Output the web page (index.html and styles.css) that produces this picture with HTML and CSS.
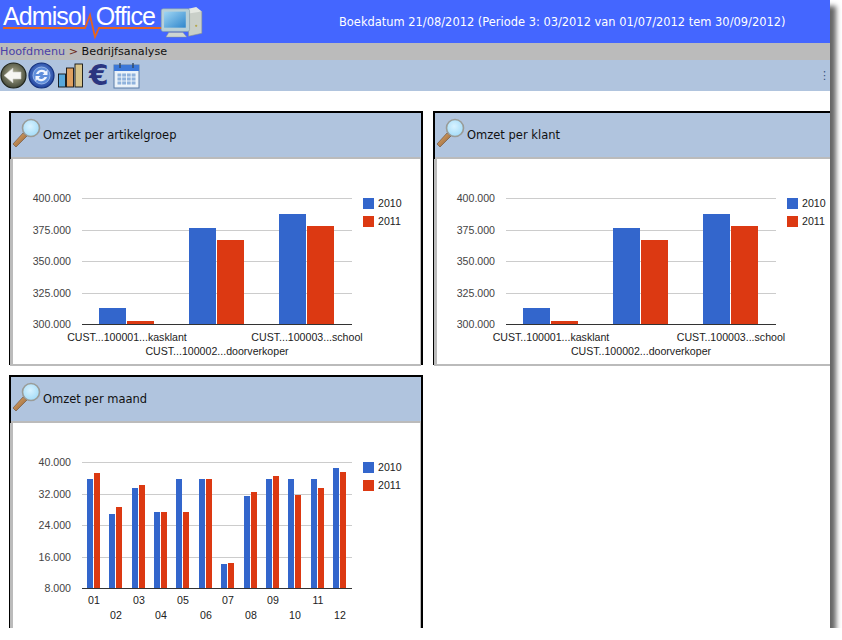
FILE: index.html
```html
<!DOCTYPE html>
<html lang="nl">

<head>
    <meta charset="UTF-8" />
    <meta name="viewport" content="width=device-width, initial-scale=1.0" />
    <title>Admisol Office - Bedrijfsanalyse</title>
    <link rel="stylesheet" href="styles.css">
</head>

<body>
    <svg class="defs" width="0" height="0" aria-hidden="true">
        <defs>
            <linearGradient id="handleGrad" x1="0" y1="0" x2="1" y2="1">
                <stop offset="0" stop-color="#e8b070" />
                <stop offset="1" stop-color="#8a5a30" />
            </linearGradient>
            <radialGradient id="lensGrad" cx="0.45" cy="0.4" r="0.6">
                <stop offset="0" stop-color="#d8f2ff" />
                <stop offset="1" stop-color="#a4dcf8" />
            </radialGradient>
            <radialGradient id="backGrad" cx="0.5" cy="0.45" r="0.6">
                <stop offset="0" stop-color="#b4b498" />
                <stop offset="1" stop-color="#3c4030" />
            </radialGradient>
            <radialGradient id="refreshGrad" cx="0.5" cy="0.45" r="0.6">
                <stop offset="0" stop-color="#6f9ae0" />
                <stop offset="1" stop-color="#1c3f9c" />
            </radialGradient>
            <linearGradient id="screenGrad" x1="0" y1="0" x2="1" y2="1">
                <stop offset="0" stop-color="#9fd6f4" />
                <stop offset="1" stop-color="#2f86cc" />
            </linearGradient>
            <symbol id="magnifier" viewBox="0 0 30 30">
                <path d="M2 26 L12 15 L16 18 L5 29 Z" fill="url(#handleGrad)" stroke="#6a4a30" stroke-width="0.6" />
                <circle cx="20" cy="10" r="8.5" fill="url(#lensGrad)" stroke="#9a9c98" stroke-width="1.6" />
            </symbol>
        </defs>
    </svg>

    <div class="page">
        <header class="topbar">
            <div class="logo">
                <span>Admisol</span><span class="logo-second">Office</span>
                <svg class="logo-line" width="170" height="40" viewBox="0 0 170 40">
                    <path d="M3 28 H85 L90 15 L95 37 L99 28 H168" fill="none" stroke="#e8641c" stroke-width="1.8" />
                </svg>
            </div>
            <svg class="logo-pc" width="44" height="34" viewBox="0 0 46 36">
                <path d="M30 4 L44 7 V30 L30 33 Z" fill="#c9cfc8" stroke="#8b938c" stroke-width="0.6" />
                <path d="M30 4 L38 2 L44 7 L30 9 Z" fill="#e4e8e2" />
                <circle cx="38" cy="22" r="1.2" fill="#b5a850" />
                <rect x="1" y="4" width="30" height="24" rx="2" fill="#b8d0d8" stroke="#7f9aa6" stroke-width="0.6" />
                <rect x="4" y="7" width="23" height="17" fill="url(#screenGrad)" />
                <path d="M9 29 H24 L28 34 H6 Z" fill="#cdd5d2" stroke="#8b938c" stroke-width="0.5" />
            </svg>
            <div class="period">Boekdatum 21/08/2012 (Periode 3: 03/2012 van 01/07/2012 tem 30/09/2012)</div>
        </header>

        <nav class="crumbs"><a href="#">Hoofdmenu</a> <span class="sep">&gt;</span> Bedrijfsanalyse</nav>

        <div class="toolbar">
            <svg class="tool" width="27" height="27" viewBox="0 0 27 27">
                <circle cx="13.5" cy="13.5" r="12.5" fill="url(#backGrad)" stroke="#20241a" stroke-width="1.2" />
                <path d="M4 13.5 L13 6 V10 H21 V17 H13 V21 Z" fill="#f6f6f2" stroke="#c8c8c0" stroke-width="0.6" />
            </svg>
            <svg class="tool" width="27" height="27" viewBox="0 0 27 27">
                <circle cx="13.5" cy="13.5" r="12.5" fill="url(#refreshGrad)" stroke="#14307c" stroke-width="1.2" />
                <circle cx="13.5" cy="13.5" r="8.5" fill="#5f8edc" stroke="#a8c4f0" stroke-width="0.8" />
                <path d="M8 12 A6 6 0 0 1 18 9.5 L19.5 7.5 V13 H14.5 L16.3 11 A3.8 3.8 0 0 0 10.5 12 Z" fill="#f2f6ff" />
                <path d="M19 15 A6 6 0 0 1 9 17.5 L7.5 19.5 V14 H12.5 L10.7 16 A3.8 3.8 0 0 0 16.5 15 Z" fill="#f2f6ff" />
            </svg>
            <svg class="tool tool-bars" width="26" height="25" viewBox="0 0 26 25">
                <rect x="0.5" y="11" width="7" height="13" fill="#58a8dc" stroke="#111" stroke-width="0.9" />
                <rect x="8.5" y="5" width="7" height="19" fill="#e0a060" stroke="#111" stroke-width="0.9" />
                <rect x="17" y="1" width="7.5" height="23" fill="#d8c48c" stroke="#111" stroke-width="0.9" />
            </svg>
            <span class="tool-euro">€</span>
            <svg class="tool" width="27" height="27" viewBox="0 0 27 27">
                <rect x="1" y="3" width="25" height="23" fill="#e8f0f8" stroke="#5a7ca8" stroke-width="1" />
                <rect x="1" y="3" width="25" height="6" fill="#3c78d8" />
                <path d="M7 1 V6 M20 1 V6" stroke="#33475f" stroke-width="1.4" />
                <path d="M4 11 H23 V23 H4 Z M4 15 H23 M4 19 H23 M8.7 11 V23 M13.5 11 V23 M18.2 11 V23" fill="#8fb2dc" stroke="#f4f8fc" stroke-width="0.9" />
            </svg>
            <span class="tool-more">⋮</span>
        </div>

        <main class="panels">
            <section class="panel">
                <h2 class="panel-head"><svg class="lens" width="30" height="30"><use href="#magnifier" /></svg>Omzet per artikelgroep</h2>
                <div class="panel-body" data-chart="groep"></div>
            </section>
            <section class="panel">
                <h2 class="panel-head"><svg class="lens" width="30" height="30"><use href="#magnifier" /></svg>Omzet per klant</h2>
                <div class="panel-body" data-chart="klant"></div>
            </section>
            <section class="panel">
                <h2 class="panel-head"><svg class="lens" width="30" height="30"><use href="#magnifier" /></svg>Omzet per maand</h2>
                <div class="panel-body" data-chart="maand"></div>
            </section>
        </main>
    </div>

    <script src="chart.js"></script>
</body>

</html>
```

FILE: styles.css
```css
body {
    font-family: 'DejaVu Sans', sans-serif;
    background: white;
    margin: 0;
}

.defs {
    position: absolute;
}

.page {
    width: 830px;
    height: 628px;
    overflow: hidden;
    background: white;
    box-shadow: 6px 6px 5px #666;
}

.topbar {
    display: flex;
    align-items: center;
    height: 43px;
    background: #4466ff;
    color: white;
}

.logo {
    position: relative;
    display: flex;
    width: 160px;
    height: 43px;
    box-sizing: border-box;
    flex: none;
    padding-left: 3px;
    font-family: 'Liberation Sans', sans-serif;
    font-size: 25px;
    letter-spacing: -0.9px;
    line-height: 33px;
}

.logo-second {
    margin-left: 10px;
}

.logo-line {
    position: absolute;
    left: 0;
    top: 0;
}

.logo-pc {
    position: relative;
    flex: none;
}

.period {
    margin-left: 135px;
    font-size: 11.45px;
    white-space: nowrap;
}

.crumbs {
    height: 17px;
    line-height: 17px;
    background: #bbbbbb;
    color: #111;
    font-size: 11.2px;
}

.crumbs a {
    color: #4a3fa8;
    text-decoration: none;
}

.crumbs .sep {
    color: #6a2a20;
}

.toolbar {
    display: flex;
    align-items: center;
    height: 31px;
    background: #b0c4de;
}

.tool {
    flex: none;
    margin-right: 1px;
}

.tool-bars {
    margin-left: 2px;
}

.tool-euro {
    width: 18px;
    margin: 0 6px 0 4px;
    color: #2a3580;
    font-size: 28px;
    font-weight: bold;
    line-height: 27px;
}

.tool-more {
    margin-left: auto;
    color: #33507a;
    font-size: 11px;
}

.panels {
    display: flex;
    flex-wrap: wrap;
    gap: 10px;
    width: 860px;
    padding: 20px 0 0 9px;
}

.panel {
    width: 414px;
    height: 254px;
    box-sizing: border-box;
    border: 2px solid black;
    border-bottom: 0;
    display: flex;
    flex-direction: column;
}

.panel-head {
    display: flex;
    align-items: center;
    gap: 2px;
    flex: none;
    height: 44px;
    margin: 0;
    background: #b0c4de;
    border-bottom: 2px solid #bbbbbb;
    color: #111;
    font-size: 11.5px;
    font-weight: normal;
}

.lens {
    flex: none;
    margin-top: -4px;
}

.panel-body {
    flex: 1;
    background: white;
    border-left: 3px solid #bbbbbb;
    border-right: 1px solid #bbbbbb;
    border-bottom: 2px solid #bbbbbb;
    margin-left: -1px;
}

.panel-body svg {
    display: block;
    margin-left: 1px;
}

.chart-text {
    font-family: 'Liberation Sans', sans-serif;
    font-size: 10.6px;
    fill: #222;
}

.chart-axis-text {
    fill: #444;
}

.chart-grid {
    stroke: #cccccc;
    stroke-width: 1;
}

.chart-base {
    stroke: #333333;
    stroke-width: 1;
}

.bar-2010 {
    fill: #3366cc;
}

.bar-2011 {
    fill: #dc3912;
}
```

FILE: chart.js
```js
const SVG_NS = 'http://www.w3.org/2000/svg';

// all x values are pixels from the left of the panel body, y from its top
const valueChart = (dots) => ({
    ticks: [[39, '400.000'], [71, '375.000'], [102, '350.000'], [134, '325.000'], [165, '300.000']],
    bars: [
        [85, 27, 149, 2010], [113, 27, 162, 2011],
        [175, 27, 69, 2010], [203, 27, 81, 2011],
        [265, 27, 55, 2010], [293, 27, 67, 2011]
    ],
    labels: [
        [113, 182, 'CUST' + dots + '100001...kasklant'],
        [203, 196, 'CUST' + dots + '100002...doorverkoper'],
        [293, 182, 'CUST' + dots + '100003...school']
    ]
});

const monthBars = [
    [73, 56, 50], [95, 91, 84], [118, 65, 62], [140, 89, 89], [162, 56, 89], [185, 56, 56],
    [207, 141, 140], [230, 73, 69], [252, 56, 53], [274, 56, 72], [297, 56, 65], [319, 45, 49]
];

const charts = {
    groep: valueChart('...'),
    klant: valueChart('..'),
    maand: {
        ticks: [[39, '40.000'], [71, '32.000'], [102, '24.000'], [134, '16.000'], [165, '8.000']],
        bars: monthBars.flatMap(([x, top2010, top2011]) => [
            [x, 6, top2010, 2010],
            [x + 7, 6, top2011, 2011]
        ]),
        labels: monthBars.map(([x], i) => [
            x + 7,
            i % 2 ? 196 : 181,
            String(i + 1).padStart(2, '0')
        ])
    }
};

function el(name, attrs, text) {
    const node = document.createElementNS(SVG_NS, name);
    for (const key in attrs) {
        node.setAttribute(key, attrs[key]);
    }
    if (text) {
        node.textContent = text;
    }
    return node;
}

function drawChart(holder, chart) {
    const svg = el('svg', { width: 407, height: 205 });

    chart.ticks.forEach(([y, label], i) => {
        const last = i === chart.ticks.length - 1;
        svg.appendChild(el('line', {
            x1: 68, x2: 338, y1: y + 0.5, y2: y + 0.5,
            class: last ? 'chart-base' : 'chart-grid'
        }));
        svg.appendChild(el('text', {
            x: 57, y: y + 4, 'text-anchor': 'end', class: 'chart-text chart-axis-text'
        }, label));
    });

    chart.bars.forEach(([x, width, top, year]) => {
        svg.appendChild(el('rect', {
            x: x, y: top, width: width, height: 165 - top, class: 'bar-' + year
        }));
    });

    chart.labels.forEach(([x, y, label]) => {
        svg.appendChild(el('text', {
            x: x, y: y, 'text-anchor': 'middle', class: 'chart-text'
        }, label));
    });

    [2010, 2011].forEach((year, i) => {
        svg.appendChild(el('rect', {
            x: 349, y: 39 + i * 18, width: 11, height: 11, class: 'bar-' + year
        }));
        svg.appendChild(el('text', { x: 364, y: 48 + i * 18, class: 'chart-text' }, String(year)));
    });

    holder.appendChild(svg);
}

document.querySelectorAll('[data-chart]').forEach((holder) => {
    drawChart(holder, charts[holder.dataset.chart]);
});
```
